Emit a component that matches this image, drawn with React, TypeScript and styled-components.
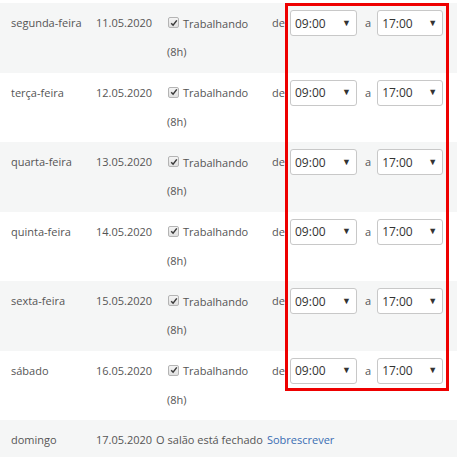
import React from "react";
import styled, { createGlobalStyle } from "styled-components";

const Global = createGlobalStyle`
  html, body { margin: 0; padding: 0; background: #fff; }
  body { font-family: "Open Sans", "Liberation Sans", sans-serif; font-size: 11px; color: #555; }
`;

const Page = styled.div`
  position: relative;
  padding-top: 3px;
  width: 457px;
  height: 457px;
  overflow: hidden;
`;

const Row = styled.div<{ $alt: boolean }>`
  display: grid;
  grid-template-columns: 85px 71px 105px 18px 1fr;
  padding: 7px 0 7.5px 11px;
  background: ${(p) => (p.$alt ? "#f5f6f6" : "#fff")};
  height: 69.5px;
  box-sizing: border-box;
`;

const ClosedRow = styled.div`
  display: flex;
  align-items: center;
  height: 40px;
  padding: 0 0 0 11px;
  background: #f5f6f6;
  line-height: 26px;
`;

const Cell = styled.div`
  line-height: 26px;
  white-space: nowrap;
`;

const DayName = styled.span`
  display: inline-block;
  width: 85px;
`;

const DateText = styled.span`
  margin-right: 4px;
`;

const StatusCell = styled.div`
  display: flex;
  flex-direction: column;
  gap: 3px;
`;

const CheckLine = styled.label`
  display: flex;
  align-items: center;
  height: 26px;
  gap: 4px;
  padding-left: 1px;
`;

const Box = styled.span`
  display: inline-flex;
  align-items: center;
  justify-content: center;
  width: 9px;
  height: 9px;
  border: 1px solid #b4b4b4;
  border-radius: 2px;
  background: linear-gradient(#f4f4f4, #e0e0e0);
  margin-top: -1px;
`;

const Hours = styled.div`
  line-height: 26px;
`;

const TimeArea = styled.div`
  display: flex;
  align-items: flex-start;
`;

const Sep = styled.span`
  line-height: 26px;
  margin: 0 6px 0 8px;
`;

const Select = styled.div<{ $w: number }>`
  display: flex;
  align-items: center;
  justify-content: space-between;
  box-sizing: border-box;
  width: ${(p) => p.$w}px;
  height: 26px;
  border: 1px solid #c8c8c8;
  border-radius: 3px;
  background: #fff;
  padding: 0 5px 0 4px;
  color: #333;
  font-size: 12px;
`;

const Arrow = styled.span`
  font-size: 9px;
  color: #333;
  line-height: 1;
  margin-top: -2px;
`;

const Link = styled.a`
  color: #3a6db3;
  text-decoration: none;
  margin-left: 4px;
`;

const Highlight = styled.div`
  position: absolute;
  left: 285px;
  top: 3px;
  width: 164px;
  height: 388px;
  border: 3px solid #ee0000;
  box-sizing: border-box;
  pointer-events: none;
`;

const days = [
  ["segunda-feira", "11.05.2020"],
  ["terça-feira", "12.05.2020"],
  ["quarta-feira", "13.05.2020"],
  ["quinta-feira", "14.05.2020"],
  ["sexta-feira", "15.05.2020"],
  ["sábado", "16.05.2020"],
];

const Check = () => (
  <svg width="8" height="8" viewBox="0 0 8 8">
    <path d="M1.2 4.2 L3.1 6.2 L6.8 1.4" stroke="#3a3a3a" strokeWidth="1.5" fill="none" />
  </svg>
);

export default function App() {
  return (
    <Page>
      <Global />
      {days.map(([d, date], i) => (
        <Row key={d} $alt={i % 2 === 0}>
          <Cell>{d}</Cell>
          <Cell>{date}</Cell>
          <StatusCell>
            <CheckLine>
              <Box>
                <Check />
              </Box>
              Trabalhando
            </CheckLine>
            <Hours>(8h)</Hours>
          </StatusCell>
          <Cell>de</Cell>
          <TimeArea>
            <Select $w={67}>
              <span>09:00</span>
              <Arrow>▼</Arrow>
            </Select>
            <Sep>a</Sep>
            <Select $w={66}>
              <span>17:00</span>
              <Arrow>▼</Arrow>
            </Select>
          </TimeArea>
        </Row>
      ))}
      <ClosedRow>
        <DayName>domingo</DayName>
        <DateText>17.05.2020</DateText>
        <span>O salão está fechado</span>
        <Link>Sobrescrever</Link>
      </ClosedRow>
      <Highlight />
    </Page>
  );
}
